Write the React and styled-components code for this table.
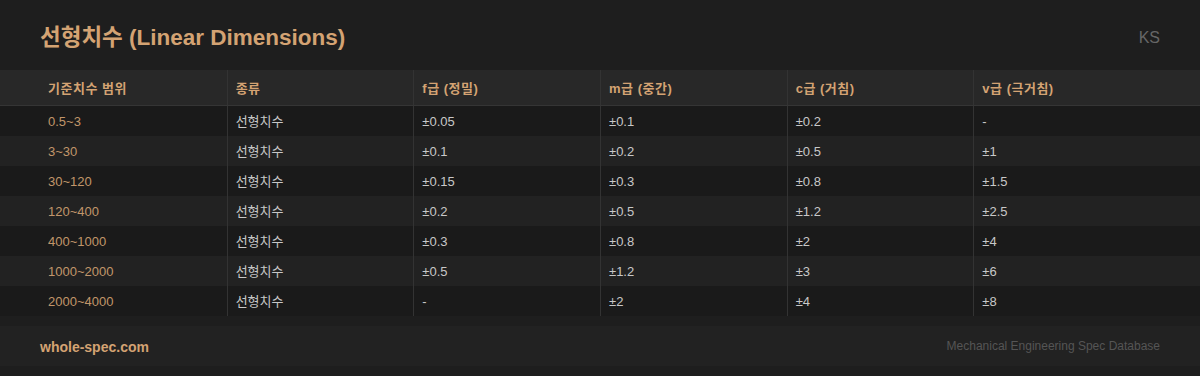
import React from "react";
import styled, { createGlobalStyle } from "styled-components";

const GlobalStyle = createGlobalStyle`
  html, body {
    margin: 0;
    padding: 0;
    background: #1e1e1e;
  }
  body {
    font-family: "Liberation Sans", "Noto Sans CJK KR", sans-serif;
    line-height: 1.3;
  }
`;

const Page = styled.div`
  width: 1200px;
  height: 376px;
  background: #1e1e1e;
  overflow: hidden;
`;

const Header = styled.div`
  height: 70px;
  padding: 0 40px;
  display: flex;
  align-items: center;
  justify-content: space-between;
  box-sizing: border-box;
`;

const Title = styled.h1`
  margin: 6px 0 0;
  font-size: 22.5px;
  font-weight: 700;
  color: #d4a373;
`;

const Badge = styled.span`
  margin-top: 6px;
  font-size: 16px;
  color: #666;
`;

const Row = styled.div`
  display: grid;
  grid-template-columns: repeat(6, 1fr);
  padding: 0 40px;
  height: ${(p) => (p.$head ? "35px" : "30px")};
  background: ${(p) => (p.$head ? "#282828" : p.$even ? "#222222" : "#1a1a1a")};
  border-bottom: ${(p) => (p.$head ? "1px solid #353535" : "none")};
`;

const Cell = styled.div`
  display: flex;
  align-items: center;
  padding: ${(p) => (p.$head ? "4px" : "2px")} 8px 0;
  font-size: 13px;
  font-weight: ${(p) => (p.$head ? 700 : 400)};
  letter-spacing: ${(p) => (p.$head ? "0.5px" : "0")};
  color: ${(p) => (p.$head || p.$accent ? "#d4a373" : "#c8c8c8")};
  opacity: ${(p) => (p.$accent ? 0.9 : 1)};
  & + & {
    border-left: 1px solid #333;
  }
`;

const Footer = styled.div`
  margin-top: 10px;
  height: 40px;
  padding: 0 40px;
  background: #222222;
  display: flex;
  align-items: center;
  justify-content: space-between;
`;

const Site = styled.span`
  margin-top: 2px;
  font-size: 14px;
  font-weight: 700;
  color: #d4a373;
`;

const Tagline = styled.span`
  margin-top: 2px;
  font-size: 12px;
  color: #555;
`;

const columns = ["기준치수 범위", "종류", "f급 (정밀)", "m급 (중간)", "c급 (거침)", "v급 (극거침)"];

const rows = [
  ["0.5~3", "±0.05", "±0.1", "±0.2", "-"],
  ["3~30", "±0.1", "±0.2", "±0.5", "±1"],
  ["30~120", "±0.15", "±0.3", "±0.8", "±1.5"],
  ["120~400", "±0.2", "±0.5", "±1.2", "±2.5"],
  ["400~1000", "±0.3", "±0.8", "±2", "±4"],
  ["1000~2000", "±0.5", "±1.2", "±3", "±6"],
  ["2000~4000", "-", "±2", "±4", "±8"],
];

export default function App() {
  return (
    <>
      <GlobalStyle />
      <Page>
        <Header>
          <Title>선형치수 (Linear Dimensions)</Title>
          <Badge>KS</Badge>
        </Header>
        <Row $head>
          {columns.map((c) => (
            <Cell $head key={c}>
              {c}
            </Cell>
          ))}
        </Row>
        {rows.map(([range, f, m, c, v], i) => (
          <Row key={range} $even={i % 2 === 1}>
            <Cell $accent>{range}</Cell>
            <Cell>선형치수</Cell>
            <Cell>{f}</Cell>
            <Cell>{m}</Cell>
            <Cell>{c}</Cell>
            <Cell>{v}</Cell>
          </Row>
        ))}
        <Footer>
          <Site>whole-spec.com</Site>
          <Tagline>Mechanical Engineering Spec Database</Tagline>
        </Footer>
      </Page>
    </>
  );
}
